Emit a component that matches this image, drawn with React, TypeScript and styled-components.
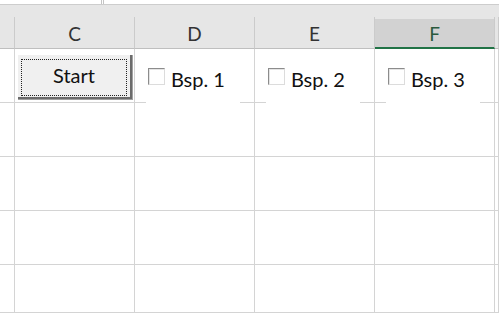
import React from 'react';
import styled, { createGlobalStyle } from 'styled-components';

const GlobalStyle = createGlobalStyle`
  html, body {
    margin: 0;
    padding: 0;
    background: #ffffff;
    overflow: hidden;
  }
  body {
    font-family: Lato, "Noto Sans", "Liberation Sans", sans-serif;
  }
`;

const COLUMNS = '15px repeat(4, 120px) 1fr';

const Sheet = styled.div`
  width: 499px;
  height: 313px;
  overflow: hidden;
  display: flex;
  flex-direction: column;
`;

const TopStrip = styled.div`
  height: 4px;
  border-bottom: 1px solid #cdcdcd;
  background: #ffffff;
  padding-left: 101px;
`;

const Splitter = styled.div`
  width: 1px;
  height: 4px;
  border-left: 1px solid #c4c4c4;
  border-right: 1px solid #c4c4c4;
`;

const HeaderBand = styled.div`
  height: 12px;
  background: #e6e6e6;
`;

const HeaderRow = styled.div`
  display: grid;
  grid-template-columns: ${COLUMNS};
  height: 32px;
  background: #e6e6e6;
`;

type HeaderCellProps = { $selected?: boolean };

const HeaderCell = styled.div<HeaderCellProps>`
  box-sizing: border-box;
  display: flex;
  align-items: center;
  justify-content: center;
  border-right: 1px solid #cbcbcb;
  border-bottom: ${(p) => (p.$selected ? '2px solid #217346' : '1px solid #bfbfbf')};
  background: ${(p) =>
    p.$selected ? 'linear-gradient(#e6e6e6 0 2px, #d2d2d2 2px)' : '#e6e6e6'};
  color: ${(p) => (p.$selected ? '#2a5a3d' : '#333333')};
  font-size: 19px;
  padding-top: ${(p) => (p.$selected ? '3px' : '2px')};
`;

const Row = styled.div<{ $last?: boolean }>`
  display: grid;
  grid-template-columns: ${COLUMNS};
  height: ${(p) => (p.$last ? 'auto' : '54px')};
  flex: ${(p) => (p.$last ? '1' : 'none')};
`;

const Cell = styled.div`
  position: relative;
  box-sizing: border-box;
  border-right: 1px solid #d4d4d4;
  border-bottom: 1px solid #d4d4d4;
`;

const ButtonCell = styled(Cell)`
  padding: 5px 0 0 2px;
`;

const StartButton = styled.button`
  box-sizing: border-box;
  width: 115px;
  height: 45px;
  padding: 3px;
  margin: 0;
  background: #f0f0f0;
  border: none;
  border-top: 1px solid #ffffff;
  border-left: 1px solid #ffffff;
  box-shadow: inset -2px -2px 0 #6b6b6b, 1px 1px 0 #a0a0a0;
  font-family: Lato, "Noto Sans", "Liberation Sans", sans-serif;
  font-size: 20px;
  color: #111111;
  cursor: pointer;
`;

const FocusRing = styled.span`
  box-sizing: border-box;
  display: flex;
  align-items: center;
  justify-content: center;
  width: 106px;
  height: 37px;
  border: 1px dotted #222222;
  padding-bottom: 4px;
`;

const CheckControl = styled.label`
  position: absolute;
  top: 5px;
  left: 11px;
  width: 94px;
  height: 50px;
  background: #ffffff;
  display: flex;
  align-items: flex-start;
  gap: 6px;
  padding: 14px 0 0 2px;
  box-sizing: border-box;
  z-index: 1;
`;

const CheckBox = styled.span`
  box-sizing: border-box;
  width: 17px;
  height: 17px;
  flex: none;
  background: #ffffff;
  border-top: 1px solid #8c8c8c;
  border-left: 1px solid #8c8c8c;
  border-right: 1px solid #dcdcdc;
  border-bottom: 1px solid #dcdcdc;
  box-shadow: inset 1px 1px 0 #e4e4e4;
`;

const CheckLabel = styled.span`
  font-size: 20px;
  line-height: 22px;
  color: #111111;
  white-space: nowrap;
`;

const columns = ['', 'C', 'D', 'E', 'F', ''];
const examples = ['Bsp. 1', 'Bsp. 2', 'Bsp. 3'];

function EmptyRow({ last }: { last?: boolean }) {
  return (
    <Row $last={last}>
      {columns.map((_, i) => (
        <Cell key={i} />
      ))}
    </Row>
  );
}

export default function App() {
  return (
    <>
      <GlobalStyle />
      <Sheet>
        <TopStrip>
          <Splitter />
        </TopStrip>
        <HeaderBand />
        <HeaderRow>
          {columns.map((name, i) => (
            <HeaderCell key={i} $selected={name === 'F'}>
              {name}
            </HeaderCell>
          ))}
        </HeaderRow>
        <Row>
          <Cell />
          <ButtonCell>
            <StartButton>
              <FocusRing>Start</FocusRing>
            </StartButton>
          </ButtonCell>
          {examples.map((label) => (
            <Cell key={label}>
              <CheckControl>
                <CheckBox />
                <CheckLabel>{label}</CheckLabel>
              </CheckControl>
            </Cell>
          ))}
          <Cell />
        </Row>
        <EmptyRow />
        <EmptyRow />
        <EmptyRow />
        <EmptyRow last />
      </Sheet>
    </>
  );
}
